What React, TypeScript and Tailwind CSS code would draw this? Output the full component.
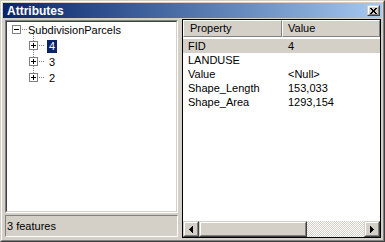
import type { ReactNode } from "react";

const font = "font-['Liberation_Sans',Arial,sans-serif]";

function Raised({ className, children }: { className: string; children?: ReactNode }) {
  return (
    <div
      className={`border border-t-[#d4d0c8] border-l-[#d4d0c8] border-r-[#404040] border-b-[#404040] ${className}`}
    >
      <div className="h-full w-full border border-t-white border-l-white border-r-[#808080] border-b-[#808080] bg-[#d4d0c8] flex items-center justify-center">
        {children}
      </div>
    </div>
  );
}

function Expander({ open, last, root }: { open?: boolean; last?: boolean; root?: boolean }) {
  const dots: ReactNode[] = [];
  for (const x of [10, 12, 14]) dots.push(<rect key={"h" + x} x={x} y={7} width={1} height={1} fill="#808080" />);
  if (!root) {
    for (const y of [0, 2]) dots.push(<rect key={"t" + y} x={4} y={y} width={1} height={1} fill="#808080" />);
    if (!last) for (const y of [12, 14]) dots.push(<rect key={"b" + y} x={4} y={y} width={1} height={1} fill="#808080" />);
  }
  return (
    <svg width="17" height="16" viewBox="0 0 17 16" shapeRendering="crispEdges" className="shrink-0">
      {dots}
      <rect x={0.5} y={3.5} width={8} height={8} fill="#fff" stroke="#808080" />
      <rect x={2} y={7} width={5} height={1} fill="#000" />
      {!open && <rect x={4} y={5} width={1} height={5} fill="#000" />}
    </svg>
  );
}

const rows = [
  ["FID", "4"],
  ["LANDUSE", ""],
  ["Value", "<Null>"],
  ["Shape_Length", "153,033"],
  ["Shape_Area", "1293,154"],
];

export default function App() {
  return (
    <div className={`w-[385px] h-[242px] bg-[#d4d0c8] text-[11px] text-black ${font} border border-t-[#d4d0c8] border-l-[#d4d0c8] border-r-[#404040] border-b-[#404040]`}>
      <div className="h-full border border-t-white border-l-white border-r-[#808080] border-b-[#808080] p-px flex flex-col">
        <div className="h-[15px] shrink-0 flex items-center justify-between pl-[4px] pr-[2px] bg-gradient-to-r from-[#0a246a] to-[#a6caf0]">
          <span className="text-white font-bold text-[12px] leading-none">Attributes</span>
          <Raised className="w-[13px] h-[11px]">
            <svg width="7" height="6" viewBox="0 0 7 6" shapeRendering="crispEdges">
              <path d="M0 0h2v1H0zM5 0h2v1H5zM1 1h2v1H1zM4 1h2v1H4zM2 2h3v2H2zM1 4h2v1H1zM4 4h2v1H4zM0 5h2v1H0zM5 5h2v1H5z" fill="#000" />
            </svg>
          </Raised>
        </div>

        <div className="flex-1 flex min-h-0">
          <div className="w-[173px] ml-[2px] mt-[2px] flex flex-col gap-[2px]">
            <div className="h-[193px] border border-t-[#808080] border-l-[#808080] border-r-white border-b-white">
              <div className="h-full border border-t-[#404040] border-l-[#404040] border-r-[#d4d0c8] border-b-[#d4d0c8] bg-white">
                <div className="relative h-[16px] flex items-center pl-[5px] leading-[16px]">
                  <Expander open root />
                  <span className="-ml-px">SubdivisionParcels</span>
                  <span className="absolute left-[26px] top-[12px] w-px h-[4px] bg-[repeating-linear-gradient(to_bottom,#808080_0_1px,transparent_1px_2px)]" />
                </div>
                {["4", "3", "2"].map((t, i) => (
                  <div key={t} className="h-[16px] flex items-center pl-[22px]">
                    <Expander last={i === 2} />
                    <span
                      className={`ml-px px-[2px] leading-[13px] ${i === 0 ? "bg-[#0a246a] text-white" : ""}`}
                    >
                      {t}
                    </span>
                  </div>
                ))}
              </div>
            </div>
            <div className="h-[22px] border border-t-[#808080] border-l-[#808080] border-r-white border-b-white flex items-center pl-[1px]">
              3 features
            </div>
          </div>

          <div className="w-[199px] ml-[4px] mt-px mb-px border border-black bg-white flex flex-col">
            <div className="h-[17px] shrink-0 flex">
              <div className="w-[99px] border border-t-white border-l-white border-r-[#808080] border-b-[#808080] bg-[#d4d0c8] flex items-center pl-[6px]">
                Property
              </div>
              <div className="flex-1 border border-t-white border-l-white border-r-[#808080] border-b-[#808080] bg-[#d4d0c8] flex items-center pl-[5px]">
                Value
              </div>
            </div>
            <div className="pt-[2px] flex-1">
              {rows.map(([k, v], i) => (
                <div key={k} className={`h-[14px] flex items-center leading-[14px] ${i === 0 ? "bg-[#d4d0c8]" : ""}`}>
                  <span className="w-[99px] pl-[5px]">{k}</span>
                  <span className="pl-[6px]">{v}</span>
                </div>
              ))}
            </div>
            <div className="h-[16px] shrink-0 flex">
              <Raised className="w-[16px] h-[16px]">
                <svg width="4" height="7" viewBox="0 0 4 7" shapeRendering="crispEdges">
                  <path d="M3 0h1v7H3zM2 1h1v5H2zM1 2h1v3H1zM0 3h1v1H0z" fill="#000" />
                </svg>
              </Raised>
              <Raised className="w-[108px] h-[16px]" />
              <div className="flex-1 bg-[repeating-conic-gradient(#d4d0c8_0%_25%,#ffffff_0%_50%)] [background-size:2px_2px]" />
              <Raised className="w-[16px] h-[16px]">
                <svg width="4" height="7" viewBox="0 0 4 7" shapeRendering="crispEdges">
                  <path d="M0 0h1v7H0zM1 1h1v5H1zM2 2h1v3H2zM3 3h1v1H3z" fill="#000" />
                </svg>
              </Raised>
            </div>
          </div>
        </div>
      </div>
    </div>
  );
}
